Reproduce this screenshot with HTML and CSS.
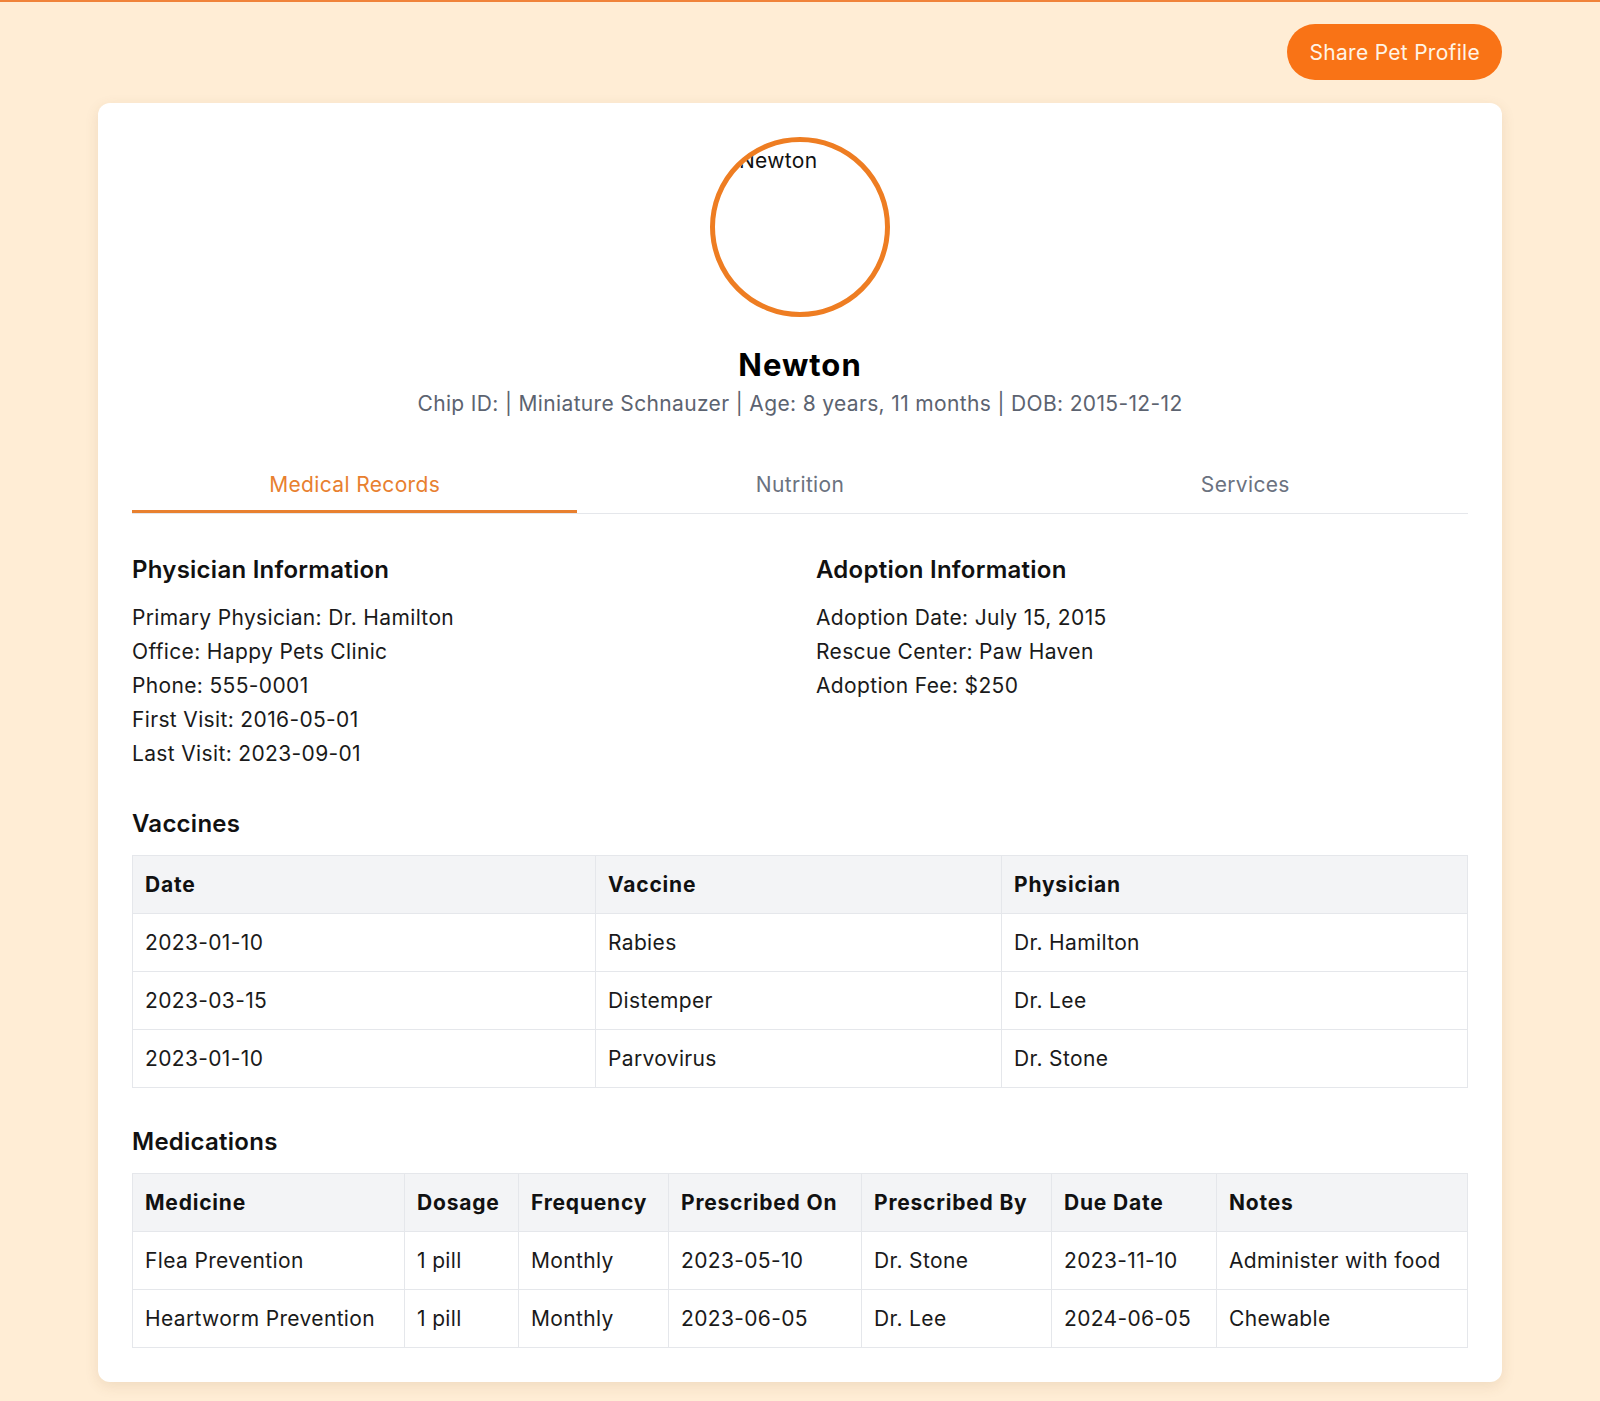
FILE: index.html
```html
<!DOCTYPE html>
<html lang="en">
<head>
<meta charset="utf-8">
<title>Newton - Pet Profile</title>
<link rel="stylesheet" href="styles.css">
</head>
<body>
<div class="page">
  <header class="topbar">
    <button class="share-btn" type="button">Share Pet Profile</button>
  </header>
  <main class="card">
    <div class="profile">
      <div class="avatar"><span class="avatar-alt">Newton</span></div>
      <h1 class="pet-name">Newton</h1>
      <p class="pet-meta">Chip ID: | Miniature Schnauzer | Age: 8 years, 11 months | DOB: 2015-12-12</p>
    </div>

    <nav class="tabs">
      <div class="tab active">Medical Records</div>
      <div class="tab">Nutrition</div>
      <div class="tab">Services</div>
    </nav>

    <section class="info-grid">
      <div class="info-col">
        <h2 class="section-title">Physician Information</h2>
        <p class="info-line">Primary Physician: Dr. Hamilton</p>
        <p class="info-line">Office: Happy Pets Clinic</p>
        <p class="info-line">Phone: 555-0001</p>
        <p class="info-line">First Visit: 2016-05-01</p>
        <p class="info-line">Last Visit: 2023-09-01</p>
      </div>
      <div class="info-col">
        <h2 class="section-title">Adoption Information</h2>
        <p class="info-line">Adoption Date: July 15, 2015</p>
        <p class="info-line">Rescue Center: Paw Haven</p>
        <p class="info-line">Adoption Fee: $250</p>
      </div>
    </section>

    <section class="table-section">
      <h2 class="section-title">Vaccines</h2>
      <table class="data-table">
        <colgroup>
          <col class="vc-date">
          <col class="vc-vaccine">
          <col>
        </colgroup>
        <thead>
          <tr><th>Date</th><th>Vaccine</th><th>Physician</th></tr>
        </thead>
        <tbody>
          <tr><td>2023-01-10</td><td>Rabies</td><td>Dr. Hamilton</td></tr>
          <tr><td>2023-03-15</td><td>Distemper</td><td>Dr. Lee</td></tr>
          <tr><td>2023-01-10</td><td>Parvovirus</td><td>Dr. Stone</td></tr>
        </tbody>
      </table>
    </section>

    <section class="table-section">
      <h2 class="section-title">Medications</h2>
      <table class="data-table">
        <colgroup>
          <col class="mc-medicine">
          <col class="mc-dosage">
          <col class="mc-frequency">
          <col class="mc-on">
          <col class="mc-by">
          <col class="mc-due">
          <col>
        </colgroup>
        <thead>
          <tr><th>Medicine</th><th>Dosage</th><th>Frequency</th><th>Prescribed On</th><th>Prescribed By</th><th>Due Date</th><th>Notes</th></tr>
        </thead>
        <tbody>
          <tr><td>Flea Prevention</td><td>1 pill</td><td>Monthly</td><td>2023-05-10</td><td>Dr. Stone</td><td>2023-11-10</td><td>Administer with food</td></tr>
          <tr><td>Heartworm Prevention</td><td>1 pill</td><td>Monthly</td><td>2023-06-05</td><td>Dr. Lee</td><td>2024-06-05</td><td>Chewable</td></tr>
        </tbody>
      </table>
    </section>
  </main>
</div>
</body>
</html>
```

FILE: styles.css
```css
* { box-sizing: border-box; }

html, body {
  margin: 0;
  padding: 0;
}

body {
  background: #ffedd5;
  border-top: 2px solid #f0833a;
  font-family: Inter, "Noto Sans", "Liberation Sans", sans-serif;
  color: #1a1a1a;
  min-height: 1401px;
}

.page {
  width: 1404px;
  margin: 0 auto;
  padding: 22px 0 18px;
}

.topbar {
  display: flex;
  justify-content: flex-end;
  margin-bottom: 23px;
}

.share-btn {
  font-family: inherit;
  font-size: 21px;
  letter-spacing: 0.3px;
  line-height: 30px;
  padding: 14px 22px 12px;
  border: none;
  border-radius: 999px;
  background: #f97316;
  color: #fff4e6;
  cursor: pointer;
}

.card {
  background: #ffffff;
  border-radius: 12px;
  padding: 34px;
  box-shadow: 0 4px 14px rgba(120, 80, 30, 0.12);
}

.profile {
  display: flex;
  flex-direction: column;
  align-items: center;
}

.avatar {
  width: 180px;
  height: 180px;
  border: 5px solid #ee7d22;
  border-radius: 50%;
  overflow: hidden;
  font-size: 21px;
  letter-spacing: 0.3px;
  line-height: 30px;
  color: #111;
}

.avatar-alt {
  display: block;
  padding: 4px 0 0 24px;
  white-space: nowrap;
}

.pet-name {
  margin: 30px 0 0;
  font-size: 31px;
  letter-spacing: 1px;
  line-height: 36px;
  font-weight: 700;
  color: #000;
}

.pet-meta {
  margin: 6px 0 0;
  font-size: 21px;
  letter-spacing: 0.35px;
  line-height: 30px;
  color: #5c6370;
}

.tabs {
  display: flex;
  margin-top: 39px;
  border-bottom: 1px solid #e5e7eb;
}

.tab {
  flex: 1 1 0;
  text-align: center;
  font-size: 21px;
  letter-spacing: 0.35px;
  line-height: 30px;
  padding: 12px 0 10px;
  border-bottom: 3px solid transparent;
  color: #6b7280;
}

.tab.active {
  color: #e8802f;
  border-bottom-color: #e8802f;
}

.info-grid {
  display: grid;
  grid-template-columns: 1fr 1fr;
  column-gap: 32px;
  margin-top: 40px;
  margin-bottom: 37px;
}

.section-title {
  margin: 0 0 16px;
  font-size: 24px;
  letter-spacing: 0.25px;
  line-height: 31px;
  font-weight: 600;
  color: #111;
}

.info-line {
  margin: 0;
  font-size: 21px;
  letter-spacing: 0.35px;
  line-height: 34px;
}

.table-section + .table-section {
  margin-top: 38px;
}

.table-section .section-title {
  margin-bottom: 16px;
}

.data-table {
  width: 100%;
  border-collapse: collapse;
  table-layout: fixed;
  font-size: 21px;
  letter-spacing: 0.35px;
  line-height: 29px;
}

.data-table th,
.data-table td {
  border: 1px solid #e5e7eb;
  padding: 14px 12px;
  text-align: left;
  white-space: nowrap;
}

.data-table th {
  background: #f3f4f6;
  font-weight: 700;
  letter-spacing: 0.8px;
  color: #111;
}

.vc-date { width: 463px; }
.vc-vaccine { width: 406px; }

.mc-medicine { width: 272px; }
.mc-dosage { width: 114px; }
.mc-frequency { width: 150px; }
.mc-on { width: 193px; }
.mc-by { width: 190px; }
.mc-due { width: 165px; }
```
